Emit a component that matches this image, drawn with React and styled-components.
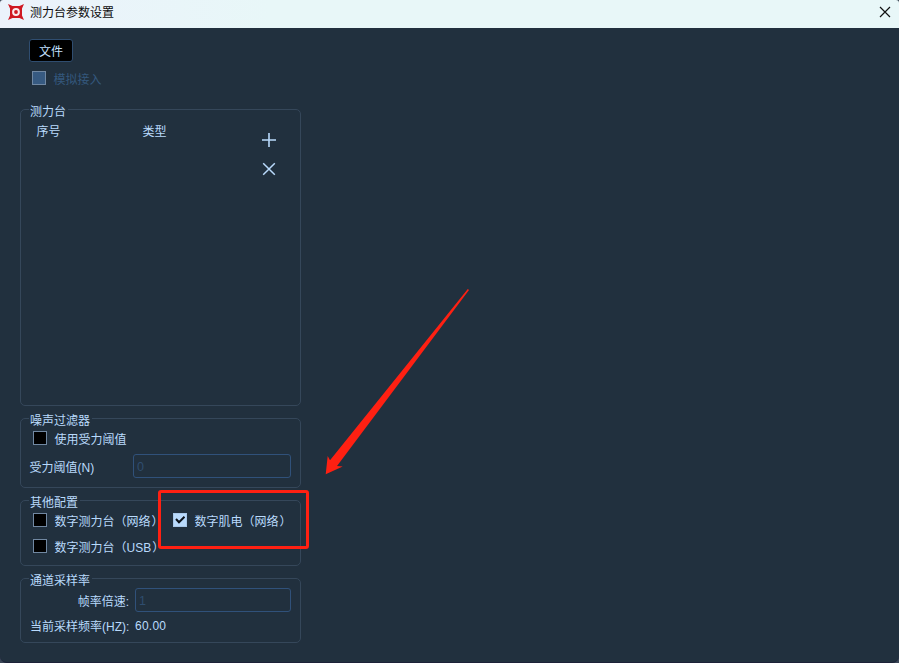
import React from "react";
import styled, { createGlobalStyle } from "styled-components";

const Global = createGlobalStyle`
  * { box-sizing: border-box; }
  body { margin: 0; background: #3a4656; overflow: hidden; }
`;

const Window = styled.div`
  position: relative;
  width: 899px;
  height: 663px;
  display: flex;
  flex-direction: column;
  overflow: hidden;
  border-bottom: 1px solid #1c2238;
  border-radius: 3px 3px 7px 7px;
  background: #21303e;
  color: #b9dafc;
  font: 12px/16px "Liberation Sans", "Noto Sans CJK SC", sans-serif;
  white-space: nowrap;
`;

const TitleBar = styled.header`
  display: flex;
  align-items: center;
  height: 28px;
  flex: none;
  padding: 0 8px 4px;
  gap: 6px;
  background: linear-gradient(90deg, #ebf2fb, #e8f7f8 30%);
  color: #0c0c0c;
`;

const Title = styled.h1`
  margin: 0;
  padding-top: 1px;
  flex: 1;
  font: inherit;
`;

const IconButton = styled.button`
  display: flex;
  padding: 0;
  border: 0;
  background: none;
  color: inherit;
`;

const Sidebar = styled.main`
  display: flex;
  flex-direction: column;
  width: 281px;
  margin-left: 20px;
  padding-top: 11px;
`;

const FileButton = styled.button`
  align-self: flex-start;
  width: 44px;
  height: 23px;
  margin-left: 9px;
  padding: 2px 0 0;
  border: 1px solid #2f4d70;
  border-radius: 3px;
  background: #000;
  color: #c4e0ff;
  font: inherit;
`;

const CheckLabel = styled.label`
  display: flex;
  flex: none;
  align-items: center;
  width: ${(p) => p.$width || "auto"};
  height: 16px;
  gap: 7.5px;
  color: ${(p) => (p.$disabled ? "#34587d" : "inherit")};
`;

const Box = styled.span`
  display: flex;
  flex: none;
  width: 14px;
  height: 14px;
  border: 1px solid ${(p) => (p.$on ? "#a9c8ea" : "#7188a2")};
  background: ${(p) => (p.$disabled ? "#375a81" : p.$on ? "#b9dafc" : "#000")};
`;

const Caption = styled.span`
  padding-top: 3px;
`;

const ClosingMark = styled.span`
  margin-left: 1px;
`;

const Group = styled.section`
  display: flex;
  flex-direction: column;
  height: ${(p) => p.$height}px;
  margin-top: ${(p) => p.$gap || 12}px;
  border: 1px solid #35475a;
  border-radius: 5px;
`;

const Legend = styled.h2`
  align-self: flex-start;
  height: 16px;
  margin: -7px 0 0 8px;
  padding: 1px 2px 0 1px;
  background: #21303e;
  font: inherit;
`;

const PlateBody = styled.div`
  display: flex;
  justify-content: space-between;
  padding: 4px 23px 0 15.5px;
`;

const Columns = styled.div`
  display: grid;
  grid-template-columns: 106px auto;
  align-content: start;
  padding-top: 1px;
`;

const Tools = styled.div`
  display: flex;
  flex-direction: column;
  gap: 13px;
  padding-top: 9px;
`;

const Row = styled.div`
  display: flex;
  align-items: center;
  height: ${(p) => p.$height || 16}px;
  margin-top: ${(p) => p.$top || 0}px;
  padding: 0 9px 0 ${(p) => p.$left || 9}px;
`;

const FieldName = styled.span`
  width: ${(p) => p.$width}px;
  flex: none;
  margin-right: ${(p) => p.$space || 0}px;
  padding-top: 3px;
  text-align: ${(p) => p.$align || "left"};
`;

const Field = styled.input`
  flex: 1;
  min-width: 0;
  height: 24px;
  padding: 1px 3px 0;
  border: 1px solid #30517a;
  border-radius: 3px;
  background: transparent;
  color: #2f4d6e;
  font: inherit;
  font-size: 12.5px;
`;

const Rate = styled.span`
  padding-top: 2px;
  letter-spacing: 0.25px;
`;

const Highlight = styled.div`
  position: absolute;
  left: 158px;
  top: 490px;
  width: 151px;
  height: 59px;
  border: 3px solid #ff2012;
  border-radius: 3px;
`;

const Arrow = styled.svg`
  position: absolute;
  left: 320px;
  top: 284px;
`;

const Logo = () => (
  <svg width="16" height="16" viewBox="0 0 16 16">
    <path d="M0 0 4.5 2H11.5L16 0 14 4.5V11.5L16 16 11.5 14H4.5L0 16 2 11.5V4.5Z" fill="#cf1822" />
    <circle cx="8" cy="8" r="3.9" fill="#fbecef" />
    <circle cx="8" cy="8" r="1.9" fill="#cf1822" />
  </svg>
);

const Check = ({ label, suffix, checked, disabled, width }) => (
  <CheckLabel $disabled={disabled} $width={width}>
    <Box $on={checked} $disabled={disabled}>
      {checked && (
        <svg width="12" height="12" viewBox="0 0 12 12">
          <path d="M2 5 5 8.2 10.5 2.8" fill="none" stroke="#0b1119" strokeWidth="2" />
        </svg>
      )}
    </Box>
    <Caption>
      {label}
      {suffix && <ClosingMark>{suffix}</ClosingMark>}
    </Caption>
  </CheckLabel>
);

export default function App() {
  return (
    <Window>
      <Global />
      <TitleBar>
        <Logo />
        <Title>测力台参数设置</Title>
        <IconButton aria-label="关闭">
          <svg width="12" height="12" viewBox="0 0 12 12">
            <path d="M1 1 11 11M11 1 1 11" stroke="#111" strokeWidth="1.2" />
          </svg>
        </IconButton>
      </TitleBar>
      <Sidebar>
        <FileButton>文件</FileButton>
        <Row $top={8} $left={12}>
          <Check label="模拟接入" disabled />
        </Row>
        <Group $height={297} $gap={23}>
          <Legend>测力台</Legend>
          <PlateBody>
            <Columns>
              <span>序号</span>
              <span>类型</span>
            </Columns>
            <Tools>
              <IconButton aria-label="添加">
                <svg width="16" height="16" viewBox="0 0 16 16">
                  <path d="M1 8H15M8 1V15" stroke="#b9dafc" strokeWidth="1.6" />
                </svg>
              </IconButton>
              <IconButton aria-label="删除">
                <svg width="16" height="16" viewBox="0 0 16 16">
                  <path d="M2.2 2.2 13.8 13.8M13.8 2.2 2.2 13.8" stroke="#b9dafc" strokeWidth="1.5" />
                </svg>
              </IconButton>
            </Tools>
          </PlateBody>
        </Group>
        <Group $height={70}>
          <Legend>噪声过滤器</Legend>
          <Row $top={2} $left={12}>
            <Check label="使用受力阈值" />
          </Row>
          <Row $top={8} $height={24} $left={8.5}>
            <FieldName $width={103.5}>受力阈值(N)</FieldName>
            <Field defaultValue="0" />
          </Row>
        </Group>
        <Group $height={66}>
          <Legend>其他配置</Legend>
          <Row $top={2} $left={12}>
            <Check label="数字测力台（网络" suffix="）" width="140px" />
            <Check label="数字肌电（网络" suffix="）" checked />
          </Row>
          <Row $top={10} $left={12}>
            <Check label="数字测力台（USB" suffix="）" />
          </Row>
        </Group>
        <Group $height={65}>
          <Legend>通道采样率</Legend>
          <Row $height={24}>
            <FieldName $width={99} $space={6} $align="right">帧率倍速:</FieldName>
            <Field defaultValue="1" />
          </Row>
          <Row $top={5}>
            <FieldName $width={105}>当前采样频率(HZ):</FieldName>
            <Rate>60.00</Rate>
          </Row>
        </Group>
      </Sidebar>
      <Arrow width="160" height="196" viewBox="320 284 160 196">
        <path d="M325.7 474.3 327.7 456 330 460.3 467.8 289 469 290 337 466 342.7 466.4Z" fill="#ff2012" />
      </Arrow>
      <Highlight />
    </Window>
  );
}
